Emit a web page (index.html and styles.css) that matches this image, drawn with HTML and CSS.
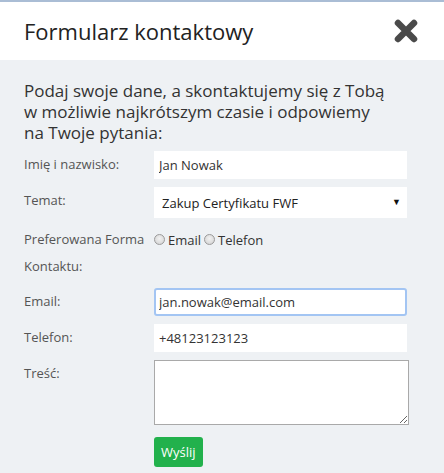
FILE: index.html
```html
<!DOCTYPE html>
<html lang="pl">
<head>
    <meta charset="UTF-8">
    <meta name="viewport" content="width=device-width, initial-scale=1.0">
    <title>Formularz kontaktowy</title>
    <link rel="stylesheet" href="styles.css">
</head>
<body>
    <div class="modal">
        <header class="modal-header">
            <h1>Formularz kontaktowy</h1>
            <button class="close-btn" aria-label="Zamknij">
                <svg width="24" height="24" viewBox="0 0 24 24">
                    <path d="M4 4 L20 20 M20 4 L4 20" stroke="#4a4a4a" stroke-width="6.5" stroke-linecap="round"/>
                </svg>
            </button>
        </header>

        <div class="modal-body">
            <p class="intro">Podaj swoje dane, a skontaktujemy się z Tobą<br>w możliwie najkrótszym czasie i odpowiemy<br>na Twoje pytania:</p>

            <form class="contact-form">
                <label for="name">Imię i nazwisko:</label>
                <input type="text" id="name" value="Jan Nowak">

                <label for="topic">Temat:</label>
                <div class="select-wrap">
                    <select id="topic">
                        <option>Zakup Certyfikatu FWF</option>
                    </select>
                </div>

                <label>Preferowana Forma<br>Kontaktu:</label>
                <div class="radios">
                    <input type="radio" name="contact" id="c-email"><span>Email</span>
                    <input type="radio" name="contact" id="c-phone"><span>Telefon</span>
                </div>

                <label for="email">Email:</label>
                <input type="text" id="email" class="focused" value="jan.nowak@email.com">

                <label for="phone">Telefon:</label>
                <input type="text" id="phone" value="+48123123123">

                <label for="message">Treść:</label>
                <textarea id="message"></textarea>

                <span></span>
                <div><button type="button" class="send-btn">Wyślij</button></div>
            </form>
        </div>
    </div>
</body>
</html>
```

FILE: styles.css
```css
body {
    margin: 0;
    padding: 0;
    font-family: 'Open Sans', 'Noto Sans', sans-serif;
    background-color: #eef1f4;
}
.modal {
    border-top: 2px solid #aabdd5;
}
.modal-header {
    background-color: #fff;
    height: 58px;
    padding: 0 24px;
    display: flex;
    justify-content: space-between;
    align-items: center;
}
.modal-header h1 {
    margin: 0;
    font-size: 22px;
    font-weight: normal;
    color: #222;
}
.close-btn {
    background: none;
    border: none;
    padding: 0;
    margin-right: 2px;
    cursor: pointer;
    display: flex;
}
.modal-body {
    padding: 20px 24px 6px;
}
.intro {
    margin: 0 0 8px;
    font-size: 17px;
    line-height: 21px;
    color: #333;
}
.contact-form {
    display: grid;
    grid-template-columns: 130px 253px;
    row-gap: 8px;
    align-items: start;
}
.contact-form label {
    font-size: 13px;
    line-height: 27px;
    color: #555;
}
.contact-form input[type="text"] {
    box-sizing: border-box;
    height: 28px;
    width: 100%;
    border: none;
    border-radius: 0;
    padding: 0 5px;
    font-family: inherit;
    font-size: 13px;
    color: #333;
    background: #fff;
    outline: none;
}
.contact-form input.focused {
    border: 2px solid #a3c5f3;
    border-radius: 3px;
    padding: 0 3px;
}
.select-wrap {
    position: relative;
}
.select-wrap select {
    appearance: none;
    -webkit-appearance: none;
    box-sizing: border-box;
    width: 100%;
    height: 31px;
    border: none;
    border-radius: 0;
    background: #fff;
    padding: 0 8px;
    font-family: inherit;
    font-size: 13px;
    color: #222;
}
.select-wrap::after {
    content: "▼";
    position: absolute;
    right: 6px;
    top: 8px;
    font-size: 9px;
    color: #111;
    pointer-events: none;
}
.radios {
    display: flex;
    align-items: center;
    height: 27px;
    font-size: 13px;
    color: #333;
}
.radios input[type="radio"] {
    appearance: none;
    -webkit-appearance: none;
    width: 11px;
    height: 11px;
    margin: 0 3px 0 0;
    border: 1px solid #9a9a9a;
    border-radius: 50%;
    background: radial-gradient(circle at 50% 40%, #f2f2f2, #cfcfcf);
}
.radios span {
    margin-right: 3px;
}
.contact-form textarea {
    box-sizing: border-box;
    width: 255px;
    height: 65px;
    border: 1px solid #a9a9a9;
    border-radius: 0;
    background: #fff;
    font-family: inherit;
    font-size: 13px;
}
.send-btn {
    margin-top: 4px;
    background-color: #22b14c;
    color: #fff;
    border: none;
    border-radius: 3px;
    padding: 0 7px;
    height: 30px;
    font-family: inherit;
    font-size: 13px;
    cursor: pointer;
}
```
